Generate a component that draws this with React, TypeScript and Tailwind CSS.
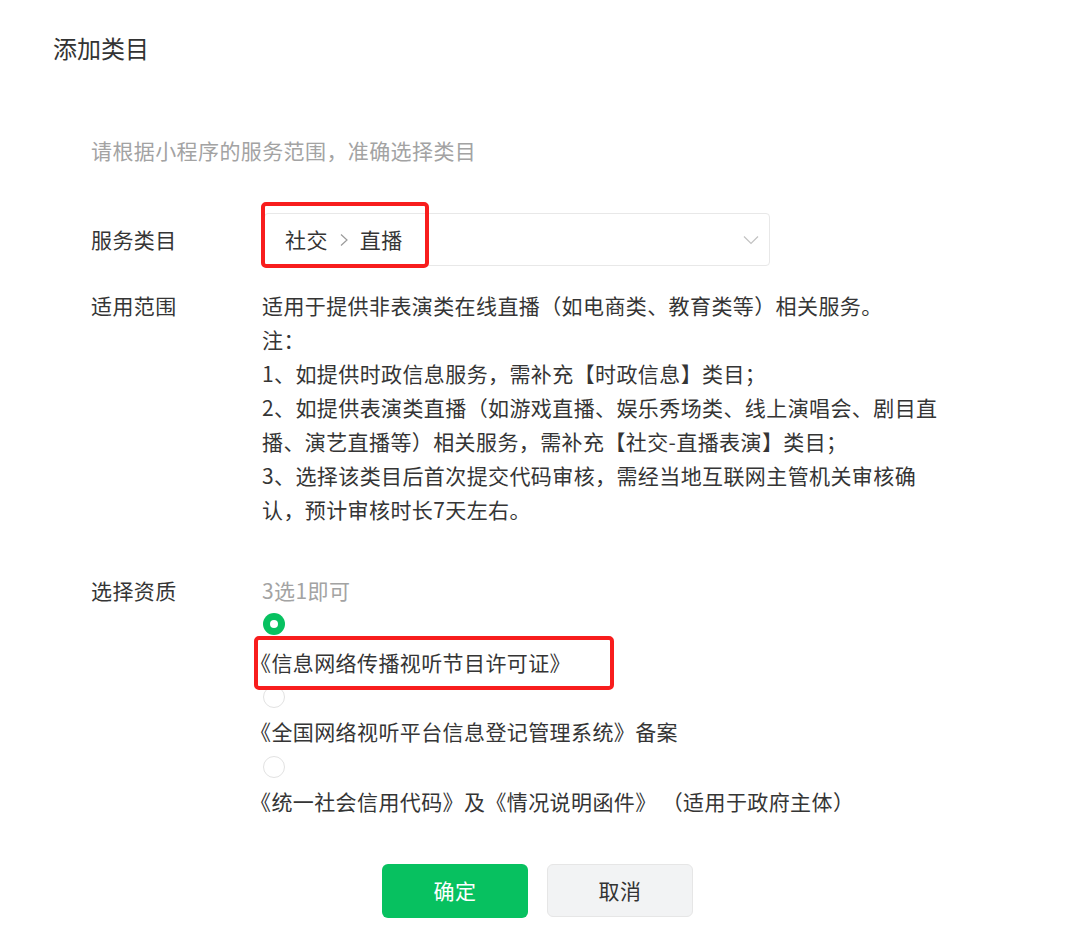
import React from 'react';

const scopeLines = [
  '适用于提供非表演类在线直播（如电商类、教育类等）相关服务。',
  '注：',
  '1、如提供时政信息服务，需补充【时政信息】类目；',
  '2、如提供表演类直播（如游戏直播、娱乐秀场类、线上演唱会、剧目直',
  '播、演艺直播等）相关服务，需补充【社交-直播表演】类目；',
  '3、选择该类目后首次提交代码审核，需经当地互联网主管机关审核确',
  '认，预计审核时长7天左右。',
];

function Radio({ checked }: { checked?: boolean }) {
  if (checked) {
    return (
      <div className="w-[22px] h-[22px] rounded-full bg-[#07c160] flex items-center justify-center">
        <div className="w-[8px] h-[8px] rounded-full bg-white" />
      </div>
    );
  }
  return <div className="w-[22px] h-[22px] rounded-full border border-[#e2e2e2] bg-white" />;
}

export default function App() {
  return (
    <div
      className="w-[1080px] h-[946px] bg-white text-[#353535] text-[21px] tracking-[0.4px] overflow-hidden"
      style={{ fontFamily: '"Noto Sans CJK SC", "Noto Sans", sans-serif' }}
    >
      {/* Header */}
      <div className="pt-[32px] pl-[53px]">
        <h1 className="text-[24px] leading-[32px] tracking-normal text-[#333]">添加类目</h1>
      </div>

      <div className="pl-[91px]">
        <p className="mt-[71px] leading-[30px] text-[#a3a3a3]">请根据小程序的服务范围，准确选择类目</p>

        {/* 服务类目 */}
        <div className="flex mt-[48px]">
          <div className="w-[173px] h-[53px] flex items-center">服务类目</div>
          <div className="relative">
            <div className="w-[506px] h-[53px] border border-[#e8e8e8] rounded-[4px] flex items-center justify-between pl-[20px] pr-[10px]">
              <div className="flex items-center">
                <span>社交</span>
                <svg width="10" height="14" viewBox="0 0 10 14" className="mx-[11px]" fill="none">
                  <path d="M2 1.5 L8 7 L2 12.5" stroke="#9b9b9b" strokeWidth="1.2" />
                </svg>
                <span>直播</span>
              </div>
              <svg width="16" height="10" viewBox="0 0 16 10" fill="none">
                <path d="M1 1.5 L8 8.5 L15 1.5" stroke="#c2c2c2" strokeWidth="1.2" />
              </svg>
            </div>
            <div className="absolute left-[-3px] top-[-11px] w-[168px] h-[66px] border-[4px] border-[#f81d1d] rounded-[5px]" />
          </div>
        </div>

        {/* 适用范围 */}
        <div className="flex mt-[22px] leading-[34px]">
          <div className="w-[171px]">适用范围</div>
          <div>
            {scopeLines.map((line) => (
              <div key={line} className="whitespace-nowrap">
                {line}
              </div>
            ))}
          </div>
        </div>

        {/* 选择资质 */}
        <div className="flex mt-[47px] leading-[34px]">
          <div className="w-[171px]">选择资质</div>
          <div>
            <div className="text-[#a3a3a3]">3选1即可</div>
            <div className="mt-[6px] ml-[1px]">
              <Radio checked />
            </div>
            <div className="relative mt-[10px] ml-[-12px] whitespace-nowrap">
              《信息网络传播视听节目许可证》
              <div className="absolute left-[4px] top-[-9px] w-[360px] h-[54px] border-[4px] border-[#f81d1d] rounded-[5px]" />
            </div>
            <div className="mt-[7px] ml-[1px]">
              <Radio />
            </div>
            <div className="mt-[6px] ml-[-12px] whitespace-nowrap">《全国网络视听平台信息登记管理系统》备案</div>
            <div className="mt-[8px] ml-[1px]">
              <Radio />
            </div>
            <div className="mt-[6px] ml-[-12px] whitespace-nowrap">
              《统一社会信用代码》及《情况说明函件》 （适用于政府主体）
            </div>
          </div>
        </div>

        {/* Actions */}
        <div className="flex gap-[19px] mt-[46px] ml-[291px]">
          <button className="w-[146px] h-[54px] rounded-[6px] bg-[#07c160] text-white">确定</button>
          <button className="w-[146px] h-[53px] rounded-[6px] bg-[#f2f3f4] border border-[#e6e6e6] text-[#333]">
            取消
          </button>
        </div>
      </div>
    </div>
  );
}
